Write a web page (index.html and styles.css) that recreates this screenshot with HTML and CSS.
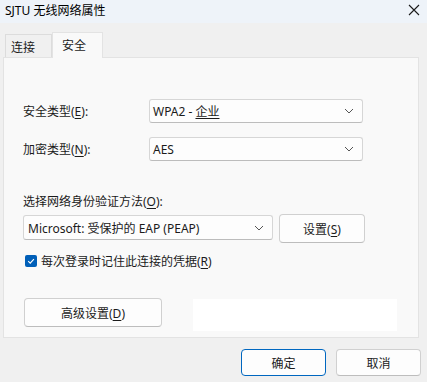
FILE: index.html
```html
<!DOCTYPE html>
<html lang="zh-CN">
<head>
    <meta charset="UTF-8">
    <title>SJTU 无线网络属性</title>
    <link rel="stylesheet" href="styles.css">
</head>
<body>
    <div class="window">
        <div class="titlebar">
            <span class="title">SJTU 无线网络属性</span>
            <svg class="close" width="12" height="12" viewBox="0 0 12 12"><path d="M1 1L11 11M11 1L1 11" stroke="#1a1a1a" stroke-width="1.1" fill="none"/></svg>
        </div>

        <div class="tabs">
            <div class="tab">连接</div>
            <div class="tab active">安全</div>
        </div>

        <div class="panel">
            <div class="row first">
                <label class="label">安全类型(<u>E</u>):</label>
                <div class="combo">
                    <span>WPA2 - <u>企业</u></span>
                    <svg class="chev" width="10" height="6" viewBox="0 0 10 6"><path d="M1 1L5 5L9 1" stroke="#555" stroke-width="1" fill="none"/></svg>
                </div>
            </div>
            <div class="row second">
                <label class="label">加密类型(<u>N</u>):</label>
                <div class="combo">
                    <span>AES</span>
                    <svg class="chev" width="10" height="6" viewBox="0 0 10 6"><path d="M1 1L5 5L9 1" stroke="#555" stroke-width="1" fill="none"/></svg>
                </div>
            </div>

            <div class="auth-label">选择网络身份验证方法(<u>O</u>):</div>
            <div class="auth-row">
                <div class="combo wide">
                    <span>Microsoft: 受保护的 EAP (PEAP)</span>
                    <svg class="chev" width="10" height="6" viewBox="0 0 10 6"><path d="M1 1L5 5L9 1" stroke="#555" stroke-width="1" fill="none"/></svg>
                </div>
                <button class="btn settings">设置(<u>S</u>)</button>
            </div>

            <div class="check-row">
                <span class="checkbox">
                    <svg width="12" height="12" viewBox="0 0 12 12"><path d="M3.2 6.2L5.2 8.1L8.9 4.2" stroke="#fff" stroke-width="1.1" fill="none"/></svg>
                </span>
                <span>每次登录时记住此连接的凭据(<u>R</u>)</span>
            </div>

            <div class="adv-row">
                <button class="btn advanced">高级设置(<u>D</u>)</button>
                <div class="blank"></div>
            </div>
        </div>

        <div class="footer">
            <button class="btn primary">确定</button>
            <button class="btn">取消</button>
        </div>
    </div>
</body>
</html>
```

FILE: styles.css
```css
* { box-sizing: border-box; }
html, body { margin: 0; padding: 0; }
body { font-family: "Noto Sans", "Noto Sans CJK SC", sans-serif; font-size: 12px; color: #1b1b1b; background: #f0f0f0; width: 427px; height: 382px; overflow: hidden; }
u { text-decoration-thickness: 1px; text-underline-offset: 2px; }

.window { display: flex; flex-direction: column; height: 100%; }
.titlebar { height: 23px; background: #eef3f9; display: flex; align-items: center; justify-content: space-between; padding: 0 7px 2px 5px; }
.title { color: #000; line-height: 16px; }
.close { margin-top: -1px; }

.tabs { display: flex; align-items: flex-end; height: 34px; padding-left: 5px; }
.tab { height: 23px; width: 47px; border: 1px solid #dcdcdc; border-bottom: none; background: #f0f0f0; display: flex; align-items: center; padding-left: 5px; padding-top: 1px; }
.tab.active { height: 26px; width: 51px; background: #f9f9f9; padding-left: 9px; padding-bottom: 3px; margin-bottom: -1px; position: relative; z-index: 1; border-color: #e3e3e3; }

.panel { margin: 0 8px 0 3px; height: 281px; border: 1px solid #e3e3e3; background: #f9f9f9; padding: 0 0 0 19px; }

.row { display: flex; align-items: center; height: 24px; }
.row.first { margin-top: 41px; }
.row.second { margin-top: 14px; }
.label { width: 126px; }

.combo { height: 24px; width: 214px; background: #fdfdfd; border: 1px solid #d6d6d6; border-bottom-color: #bcbcbc; border-radius: 3px; display: flex; align-items: center; justify-content: space-between; padding: 0 8px 0 3px; }
.combo.wide { width: 250px; height: 25px; margin-top: 1px; padding-left: 4px; }

.auth-label { margin-top: 33px; line-height: 16px; }
.auth-row { display: flex; gap: 6px; margin-top: 4px; align-items: flex-start; }

.btn { font-family: inherit; font-size: 12px; color: #1b1b1b; background: #fdfdfd; border: 1px solid #d0d0d0; border-bottom-color: #bdbdbd; border-radius: 4px; padding: 0; cursor: pointer; }
.settings { width: 86px; height: 29px; }

.check-row { display: flex; align-items: center; gap: 4px; margin-top: 10px; height: 16px; padding-left: 2px; }
.checkbox { width: 12px; height: 12px; border-radius: 2px; background: #005fb8; display: flex; }

.adv-row { display: flex; margin-top: 29px; }
.advanced { width: 138px; height: 29px; margin-left: 1px; }
.blank { width: 204px; height: 32px; margin-left: 31px; margin-top: 1px; background: #fff; }

.footer { display: flex; justify-content: flex-end; gap: 10px; padding: 11px 6px 0 0; }
.footer .btn { width: 85px; height: 27px; }
.btn.primary { border: 1px solid #0067c0; }
```
